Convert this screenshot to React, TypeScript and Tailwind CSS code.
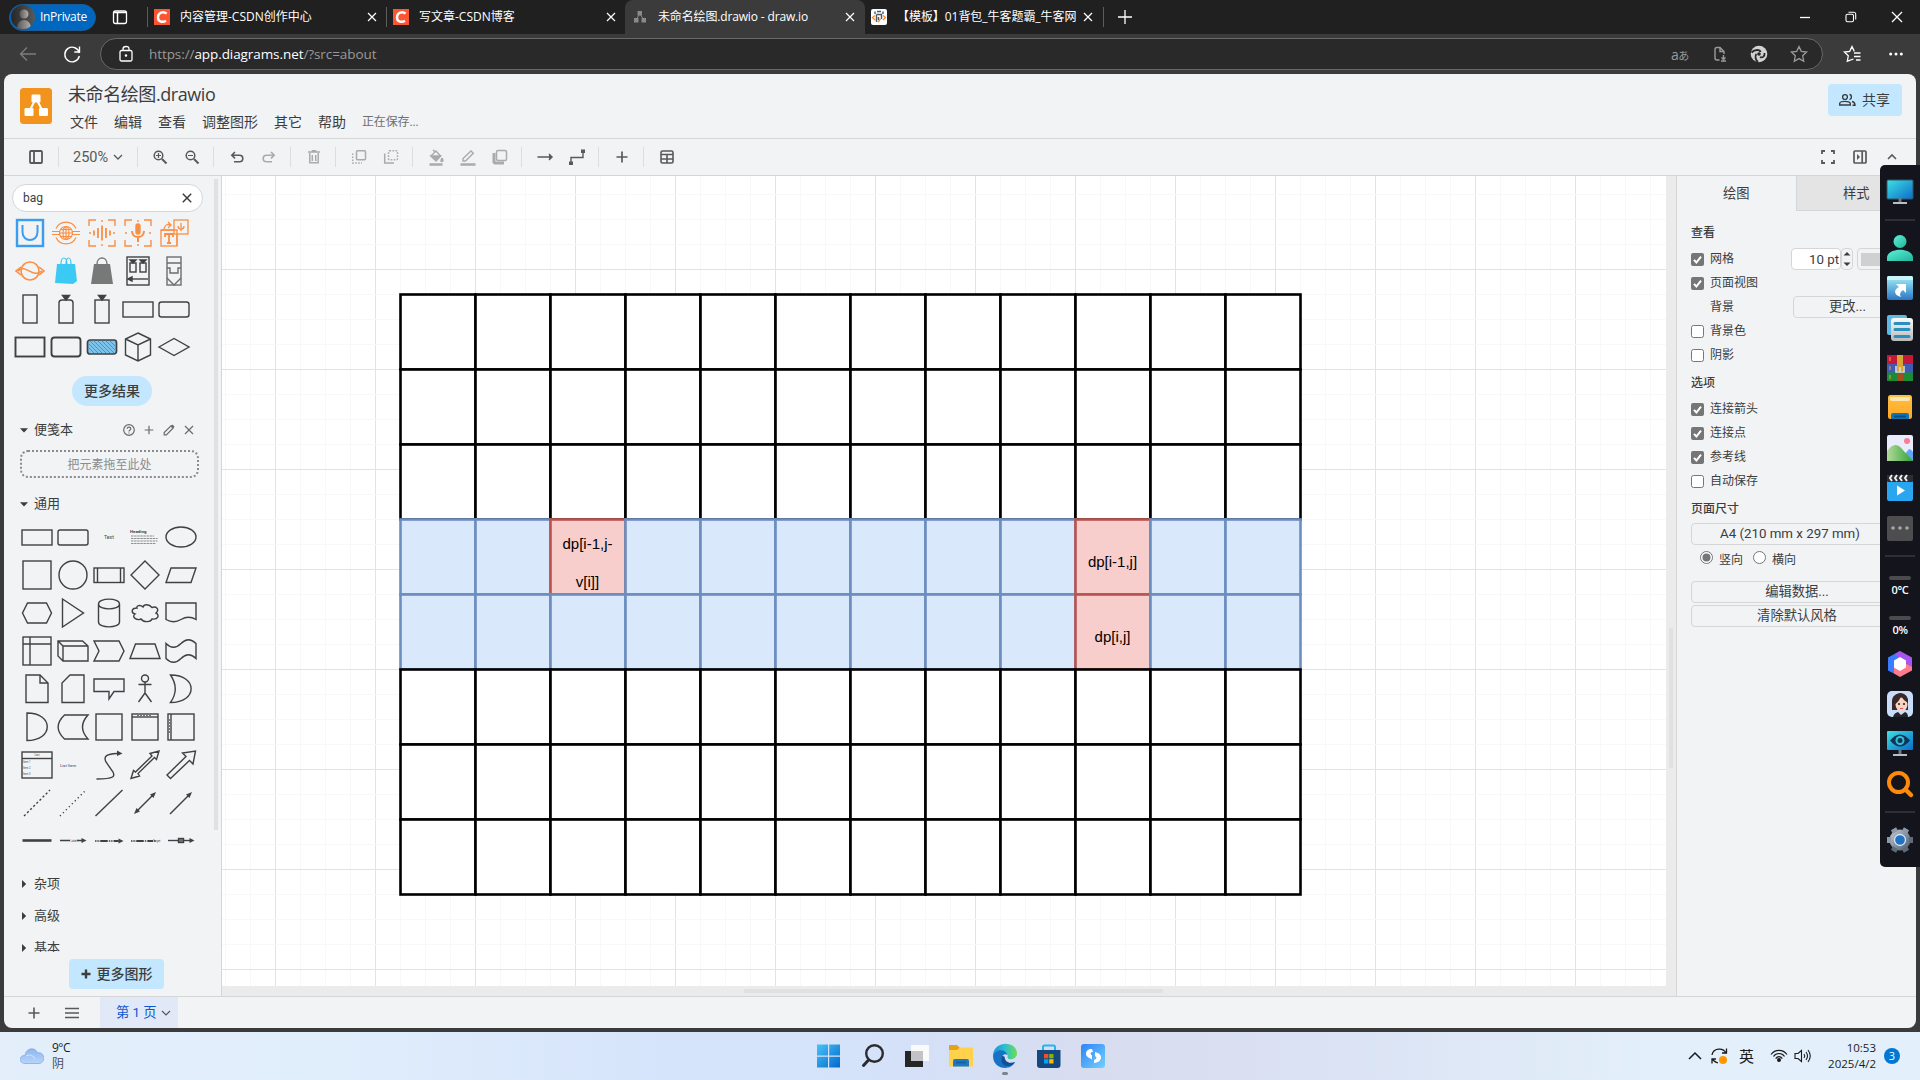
import React from 'react';

type Kids = { children?: React.ReactNode };

const ui = "font-['Roboto','Noto_Sans_CJK_SC',sans-serif]";
const win = "font-['Open_Sans','Noto_Sans_CJK_SC',sans-serif]";

function Ico({ s = 16, c = '', w = 1.3, children }: Kids & { s?: number; c?: string; w?: number }) {
  return (
    <svg width={s} height={s} viewBox={`${-s / 2} ${-s / 2} ${s} ${s}`} className={`shrink-0 overflow-visible ${c}`} fill="none" stroke="currentColor" strokeWidth={w}>
      {children}
    </svg>
  );
}

const Cross = ({ r = 4, w = 1.2 }: { r?: number; w?: number }) => (
  <Ico s={10} w={w}><path d={`M${-r} ${-r}L${r} ${r}M${r} ${-r}L${-r} ${r}`} /></Ico>
);

/* ---------- browser chrome ---------- */

function CsdnIcon() {
  return (
    <div className="flex h-4 w-4 shrink-0 items-center justify-center bg-[#fc5531]">
      <Ico s={16} w={2.4} c="text-white"><path d="M4.6 -3.4C1.5 -6 -4 -4.6 -4 .4C-4 5.2 1 5.6 4 3.8" /></Ico>
    </div>
  );
}

function TabStrip() {
  return (
    <div className={`flex h-[34px] shrink-0 items-center bg-[#202020] text-[12px] text-white ${win}`}>
      <div className="ml-[9px] flex h-[27px] w-[87px] shrink-0 items-center rounded-full border border-[#1b5c97] bg-[#0067c0]">
        <div className="ml-px h-6 w-6 overflow-hidden rounded-full bg-gradient-to-r from-[#262626] to-[#5a5a5a]">
          <svg width="24" height="24">
            <defs><linearGradient id="av"><stop offset="0" stopColor="#555" /><stop offset="1" stopColor="#b5b0aa" /></linearGradient></defs>
            <circle cx="13" cy="9" r="4.5" fill="url(#av)" /><path d="M6 24C6 12 20 12 20 24Z" fill="url(#av)" />
          </svg>
        </div>
        <span className="ml-[5px] whitespace-nowrap text-[12px] tracking-[-0.3px]">InPrivate</span>
      </div>
      <div className="ml-4 flex w-4 justify-center"><Ico><rect x="-6.5" y="-6" width="13" height="12.5" rx="2" /><path d="M-6.5 -4.6H6.5M-2.5 -4V6" strokeWidth="1.5" /></Ico></div>
      <div className="ml-[19px] h-5 w-px bg-[#5c5c5c]" />
      <div className="ml-[6px] flex w-[232px] items-center">
        <CsdnIcon />
        <span className="ml-[10px] w-[182px] whitespace-nowrap">内容管理-CSDN创作中心</span><span className="ml-[5px]"><Cross /></span>
      </div>
      <div className="h-5 w-px bg-[#5c5c5c]" />
      <div className="ml-[6px] flex w-[232px] items-center">
        <CsdnIcon />
        <span className="ml-[10px] w-[182px] whitespace-nowrap">写文章-CSDN博客</span><span className="ml-[5px]"><Cross /></span>
      </div>
      <div className="flex h-full w-[240px] items-center rounded-t-lg bg-[#3b3b3b]">
        <svg width="12" height="12" className="ml-[9px] text-[#8a8a8a]" fill="currentColor" stroke="currentColor"><rect x="3.5" y="0" width="4.5" height="4.5" stroke="none" /><rect x="0" y="7" width="4.5" height="4.5" stroke="none" /><rect x="7.5" y="7" width="4.5" height="4.5" stroke="none" /><path d="M5.7 3L2.5 8M5.7 3L9.5 8" /></svg>
        <span className="ml-[12px] w-[182px] whitespace-nowrap text-[12px] tracking-[-0.15px]">未命名绘图.drawio - draw.io</span><span className="ml-[5px]"><Cross /></span>
      </div>
      <div className="ml-[6px] flex h-4 w-4 items-center justify-center rounded-[2px] bg-white">
        <Ico s={14} w={1.4} c="text-[#4a5a68]"><path d="M-4 -5.5V-3M-2 -5.500H2M4 -5.500V-3M-2.500 -2.500H2.500V2M-2.500 -2.500V5M-.5 0V3" /><path d="M-4 -1.5L-6.5 0.5L-4 3M4 -1.5L6.5 0.5L4 3M-1 5L1.500 2" stroke="#ff8a2a" /></Ico>
      </div>
      <span className="ml-[10px] w-[186px] whitespace-nowrap tracking-[-0.05px]">【模板】01背包_牛客题霸_牛客网</span>
      <span><Cross /></span>
      <div className="ml-[10px] h-5 w-px bg-[#5c5c5c]" />
      <div className="ml-[13px]"><Ico><path d="M-7 0H7M0 -7V7" /></Ico></div>
      <div className="ml-auto flex">
        <div className="flex w-[46px] justify-center"><Ico><path d="M-5 .5H5" /></Ico></div>
        <div className="flex w-[46px] justify-center"><Ico w={1.1}><rect x="-5" y="-2.7" width="7.5" height="7.5" rx="1.5" /><path d="M-2.5 -4.8H3A1.8 1.8 0 0 1 4.7 -3V2.5" /></Ico></div>
        <div className="flex w-[46px] justify-center"><Ico><path d="M-5 -5L5 5M5 -5L-5 5" /></Ico></div>
      </div>
    </div>
  );
}

const star = 'M0 -7.5L2.3 -2.6L7.6 -2L3.7 1.8L4.7 7.2L0 4.6L-4.7 7.2L-3.7 1.8L-7.6 -2L-2.3 -2.6Z';

function AddressBar() {
  return (
    <div className={`flex h-10 shrink-0 items-center bg-[#3b3b3b] ${win}`}>
      <Ico c="ml-5 text-[#7d7d7d]"><path d="M8 0H-7M-1 -6.5L-7.5 0L-1 6.5" /></Ico>
      <Ico c="ml-7 text-white" w={1.4}><path d="M7.3 -1A7.3 7.3 0 1 0 7.3 2M7.5 -7.5V-2H2.3" /></Ico>
      <div className="ml-5 flex h-8 w-[1723px] items-center rounded-full border border-[#686868] bg-[#292929] text-[#9a9a9a]">
        <Ico c="ml-[17px] text-white"><rect x="-6" y="-3.5" width="12" height="10.5" rx="1.5" /><path d="M-3 -3.5V-5Q-3 -7.5 0 -7.5T3 -5V-3.5" /><circle cx="0" cy="1.5" r=".6" fill="currentColor" /></Ico>
        <span className="ml-[15px] whitespace-nowrap text-[13.5px] tracking-[-0.08px]">https://<span className="text-white">app.diagrams.net</span>/?src=about</span>
        <span className="ml-auto w-5 whitespace-nowrap text-[14px] tracking-[-0.5px]">a<span className="text-[11px]">あ</span></span>
        <Ico c="ml-[21px]" w={1.4}><path d="M-.5 6H-3Q-5 6 -5 4V-4.5Q-5 -6.5 -3 -6.5H0L4 -2.5V0M0 -6V-2.5H4M3.5 1V5M1.5 3.5L3.5 5.5L5.5 3.5M1 7H6" /></Ico>
        <svg width="18" height="18" viewBox="-9 -9 18 18" className="ml-[22px]"><circle r="8.3" fill="#d2d2d2" /><path d="M-7.5 -1.5C-4 -5 1 -4.5 1.500 -2M5.500 -1C6 3 3 4 1 3M-1 8C-3.500 6 -4.500 2 -2.500 0" stroke="#292929" strokeWidth="1.8" fill="none" /><circle r="1.800" fill="#292929" /></svg>
        <Ico c="ml-[23px] mr-[15px]"><path d={star} /></Ico>
      </div>
      <Ico c="ml-[21px] text-white"><path d="M1.5 5L-4.7 7.2L-3.7 1.8L-7.6 -2L-2.3 -2.6L0 -7.5L2.3 -2.6M2 -1H8.5M2 2.5H8.5M4 6H8.5" /></Ico>
      <Ico c="ml-[28px] text-white"><g fill="currentColor" stroke="none"><circle cx="-5.3" r="1.5" /><circle r="1.5" /><circle cx="5.3" r="1.5" /></g></Ico>
    </div>
  );
}

/* ---------- application header ---------- */

function Header() {
  return (
    <div className="flex h-[65px] shrink-0 border-b border-[#d5d6d8] text-[#3c3d3f]">
      <svg width="32" height="36" className="ml-4 mt-[14px]">
        <rect width="32" height="36" rx="3.5" fill="#f2931e" />
        <path d="M16 10L9 24M16 10L23 24" stroke="#fff" strokeWidth="2" />
        <g fill="#fff"><rect x="11.5" y="6.5" width="9" height="8" rx="1.3" /><rect x="4.5" y="20" width="9" height="8" rx="1.3" /><rect x="19" y="20" width="9" height="8" rx="1.3" /></g>
      </svg>
      <div className="ml-4 flex flex-col">
        <div className={`mt-[7px] h-[26px] text-[18px] leading-[26px] tracking-[-0.42px] ${win}`}>未命名绘图.drawio</div>
        <div className="ml-[2px] mt-[5px] flex h-[20px] items-center gap-4 whitespace-nowrap text-[14px]">
          <span>文件</span><span>编辑</span><span>查看</span><span>调整图形</span><span>其它</span><span>帮助</span>
          <span className="text-[12px] tracking-[-0.15px] text-[#6f7072]">正在保存...</span>
        </div>
      </div>
      <div className="ml-auto mr-[14px] mt-[10px] flex h-8 w-[74px] items-center rounded bg-[#c2e7ff] text-[14px]">
        <Ico s={18} c="ml-[10px]" w={1.4}><circle cx="-2" cy="-3" r="2.4" /><path d="M-7.3 5V3.5C-7.3 .7 3.3 .7 3.3 3.5V5Z" /><path d="M2.5 -5.500C5 -5.500 5 -.5 2.5 -.5M5 1.500C7.5 2 8 3 8 5.2H5.5" /></Ico>
        <span className="ml-[6px] whitespace-nowrap">共享</span>
      </div>
    </div>
  );
}

const Btn = ({ children, dim }: Kids & { dim?: boolean }) => (
  <div className={`flex h-8 w-8 items-center justify-center ${dim ? 'text-[#a9abad]' : 'text-[#58595b]'}`}>{children}</div>
);
const Sep = () => <div className="ml-[5px] mr-[7px] h-5 w-px bg-[#dcdde0]" />;
const Group = ({ children }: Kids) => <div className="flex items-center">{children}</div>;

function Toolbar() {
  return (
    <div className="flex h-[37px] shrink-0 items-center border-b border-[#d5d6d8]">
      <div className="pl-4"><Btn><Ico w={1.8}><rect x="-6" y="-6" width="12" height="12" rx="1" /><path d="M-2 -6V6" /></Ico></Btn></div>
      <div className="ml-[6px] h-5 w-px bg-[#dcdde0]" />
      <div className="ml-[14px] flex w-[64px] items-center text-[14.5px] text-[#58595b]"><span className="mt-[2px] w-[36px]">250%</span><Ico s={12} c="ml-[3px]"><path d="M-4 -2L0 2L4 -2" /></Ico></div>
      <div className="mr-[6px] h-5 w-px bg-[#dcdde0]" />
      <Group>
        <Btn><Ico w={1.5}><circle cx="-1.5" cy="-1.5" r="4.3" /><path d="M2 2L6.5 6.5" strokeWidth="2" /><path d="M-4 -1.5H1M-1.5 -4V1" strokeWidth="1.2" /></Ico></Btn>
        <Btn><Ico w={1.5}><circle cx="-1.5" cy="-1.5" r="4.3" /><path d="M2 2L6.5 6.5" strokeWidth="2" /><path d="M-4 -1.5H1" strokeWidth="1.2" /></Ico></Btn>
      </Group>
      <Sep />
      <Group>
        <Btn><Ico w={1.6}><path d="M-3 4.8H2.5A3.3 3.3 0 0 0 2.5 -1.8H-5M-2 -5L-5.2 -1.8L-2 1.4" /></Ico></Btn>
        <Btn dim><Ico w={1.6}><path d="M3 4.8H-2.5A3.3 3.3 0 0 1 -2.5 -1.8H5M2 -5L5.2 -1.8L2 1.4" /></Ico></Btn>
      </Group>
      <Sep />
      <Group>
        <Btn dim><Ico w={1.5}><path d="M-4.2 -4V5.8H4.2V-4M-6 -5H6M-2.3 -6.3H2.3M-1.7 -2V4M1.7 -2V4" /></Ico></Btn>
      </Group>
      <Sep />
      <Group>
        <Btn dim><Ico w={1.5}><rect x="-2.5" y="-6.3" width="9" height="9" rx="1" /><path d="M-6.3 -3.5V6H3" strokeDasharray="1.6 1.4" /></Ico></Btn>
        <Btn dim><Ico w={1.5}><rect x="-2.5" y="-6.3" width="9" height="9" rx="1" strokeDasharray="1.6 1.4" /><path d="M-6.3 -3.5V6H3" /></Ico></Btn>
      </Group>
      <Sep />
      <Group>
        <Btn dim><Ico w={1.4}><path d="M-5 -1L0 -6L4.5 -1L0 3.8ZM-1 -5L-3 -7.2" /><path d="M-5 -1H4.5L0 3.8ZM6 1.2Q8 4 6 4.5T6 1.2" fill="currentColor" /><path d="M-6.5 7.5H6.5" strokeWidth="2.6" /></Ico></Btn>
        <Btn dim><Ico w={1.4}><path d="M-5 4V1.5L3 -6L5.3 -3.8L-2.5 4Z" /><path d="M-7.5 7.5H7.5" strokeWidth="2.6" /></Ico></Btn>
        <Btn dim><Ico w={1.5}><rect x="-3.5" y="-6.5" width="10" height="10" rx="1.5" /><path d="M-6 -4V4.5Q-6 6 -4.5 6H4" strokeWidth="3" /></Ico></Btn>
      </Group>
      <Sep />
      <Group>
        <Btn><Ico w={1.4}><path d="M-7.5 0H6M4 -3L7 0L4 3" /><path d="M4 -2.5L7.5 0L4 2.5Z" fill="currentColor" stroke="none" /></Ico></Btn>
        <Btn><Ico w={1.4}><path d="M-6 5V.5H6V-5" /><path d="M-8 4.5H-4V8H-8ZM4 -7.5H8V-4H4Z" fill="currentColor" stroke="none" /></Ico></Btn>
      </Group>
      <Sep />
      <Group>
        <Btn><Ico w={1.7}><path d="M-5.5 0H5.5M0 -5.5V5.5" /></Ico></Btn>
      </Group>
      <Sep />
      <Group>
        <Btn><Ico w={1.6}><rect x="-6" y="-6" width="12" height="12" rx="1.5" /><path d="M-6 -2.5H6M-6 2H6M0 -2.5V6" /></Ico></Btn>
      </Group>
      <div className="ml-auto mr-2 flex">
        <Btn><Ico w={1.8}><path d="M-6 -3V-6H-3M3 -6H6V-3M6 3V6H3M-3 6H-6V3" /></Ico></Btn>
        <Btn><Ico w={1.7}><rect x="-6" y="-6" width="12" height="12" rx="1" /><path d="M2.2 -6V6" /><path d="M-3 -3L0 0L-3 3Z" fill="currentColor" stroke="none" /></Ico></Btn>
        <Btn><Ico w={1.6}><path d="M-4 2L0 -2L4 2" /></Ico></Btn>
      </div>
    </div>
  );
}

/* ---------- left palette ---------- */

const orange = '#fa8f44';
const scanFrame = <path d="M-13 -7V-13H-6M6 -13H13V-7M13 7V13H6M-6 13H-13V7M0 -13V-11M0 13V11M-13 0H-11M13 0H11" />;

const searchShapes: React.ReactNode[] = [
  <g stroke="#3b9df0"><rect x="-13" y="-13" width="26" height="26" strokeWidth="2.4" /><path d="M-7.5 -8V-1C-7.5 9.5 7.5 9.5 7.5 -1V-8" strokeWidth="2" /></g>,
  <g stroke={orange} strokeWidth="1.2"><circle r="6.5" /><ellipse rx="3" ry="6.5" /><path d="M-14 -1.5H-6M14 -1.5H6M-14 1.5H-6M14 1.5H6M-6 0H6M0 -6V6M-5.5 -3.5H5.5M-5.5 3.5H5.5M-10 -4.5C-6 -13 6 -13 10 -4.5M-10 4.5C-6 13 6 13 10 4.5" /></g>,
  <g stroke={orange} strokeWidth="1.4">{scanFrame}<path d="M0 -7.5V7.5M-4 -5V5M4 -5V5M-8 -2.5V2.5M8 -2.5V2.5" strokeWidth="1.8" /></g>,
  <g stroke={orange} strokeWidth="1.4">{scanFrame}<rect x="-2" y="-9" width="4" height="10" rx="2" fill={orange} /><path d="M-6 -2C-6 6 6 6 6 -2M0 5V9" strokeWidth="2" /></g>,
  <g stroke={orange} strokeWidth="1.3"><rect x="-13" y="-3" width="16" height="16" /><rect x="0" y="-13" width="14" height="14" fill="#f1f3f4" /><path d="M-13 -3H3V13" /><path d="M-9 4V1H-1V4M-5 1V10M-7 10H-3" strokeWidth="1.8" /><path d="M-10 -4C-9 -9 -6 -9 -3 -8M-6 -11L-3 -8L-6 -5M7 -10V-5M4 -7C4 -3 10 -3 10 -7M7 -4V-2" /></g>,
  <g stroke={orange} strokeWidth="1.6"><circle r="9" /><path d="M-9 -4L-14 0L-9 4M9 -4L14 0L9 4M-12 0C-4 -8 2 8 12 0" /></g>,
  <g><path d="M-9 -7H9L11 10L7 13L-11 12Z" fill="#3bcaf3" stroke="none" /><path d="M-5 -7C-5 -15 1 -15 1 -7M0 -7C0 -15 5 -15 5 -7" stroke="#3bcaf3" strokeWidth="1.2" /></g>,
  <g><path d="M-8 -7H8L11 13H-11Z" fill="#777978" stroke="none" /><path d="M-5 -7C-5 -15 5 -15 5 -7" stroke="#777978" /></g>,
  <g><rect x="-11" y="-14" width="22" height="28" /><rect x="-8" y="-8" width="6" height="9" /><rect x="2" y="-8" width="6" height="9" /><path d="M-8 -11H-2L-5 -8ZM2 -11H8L5 -8ZM-10 8L-6 6V10Z" fill="currentColor" /><path d="M-9 8H10" /></g>,
  <g stroke="#6b6d6e"><rect x="-7" y="-14" width="14" height="28" /><path d="M-7 -8H7M-7 -3H-4V2H4V-3H7M-7 7L0 14L7 7" /></g>,
  <rect x="-7" y="-14" width="14" height="28" />,
  <g><path d="M-7 14V-6Q-7 -9 -4 -9H4Q7 -9 7 -6V14Z" /><path d="M-3.5 -13.5H3.5L0 -9Z" fill="currentColor" /></g>,
  <g><rect x="-7" y="-9" width="14" height="23" /><path d="M-3.5 -13.5H3.5L0 -9Z" fill="currentColor" /></g>,
  <rect x="-15" y="-7" width="30" height="15" />,
  <rect x="-15" y="-7" width="30" height="15" rx="2.5" />,
  <rect x="-14.5" y="-9.5" width="29" height="19" strokeWidth="1.9" />,
  <rect x="-14.5" y="-9.5" width="29" height="19" rx="3" strokeWidth="1.9" />,
  <g><rect x="-14.5" y="-7" width="29" height="14" rx="2.5" fill="#7cc4ec" strokeWidth="1.7" /><path d="M-12 -6L0 6M-8 -6L4 6M-4 -6L8 6M0 -6L12 6M4 -6L13 3M8 -6L13 -1M-13 -3L-4 6M-13 1L-8 6" stroke="#2a9fd8" strokeWidth="1" /></g>,
  <path d="M0 -14L12.5 -8V8L0 14L-12.5 8V-8ZM-12.5 -8L0 -2L12.5 -8M0 -2V14" />,
  <path d="M-15 0L0 -8.5L15 0L0 8.5Z" />,
];

const tiny = (x: number, y: number, t: string, size = 3, extra: React.SVGProps<SVGTextElement> = {}) => (
  <text x={x} y={y} fontSize={size} fill="#444" stroke="none" {...extra}>{t}</text>
);

const generalShapes: React.ReactNode[] = [
  <rect x="-15" y="-7" width="30" height="15" />,
  <rect x="-15" y="-7" width="30" height="15" rx="2" />,
  tiny(-5, 2, 'Text', 5.2),
  <g>{tiny(-15, -4, 'Heading', 4.4, { fontWeight: 700 })}<path d="M-14 -1H9M-14 1.5H12.5M-14 4H12.5M-14 6.5H11" stroke="#777" strokeWidth=".8" strokeDasharray="2.5 .6" /></g>,
  <ellipse rx="15" ry="10" />,
  <rect x="-14" y="-14" width="28" height="28" />,
  <circle r="14" />,
  <g><rect x="-15" y="-7" width="30" height="14.5" /><path d="M-11.5 -7V7.5M11.5 -7V7.5" /></g>,
  <path d="M0 -14L14 0L0 14L-14 0Z" />,
  <path d="M-10 -7H15L10 7.5H-15Z" />,
  <path d="M-9.5 -10H9.5L14.5 0L9.5 10H-9.5L-14.5 0Z" />,
  <path d="M-10.5 -14L10.5 0L-10.5 14Z" />,
  <path d="M-10.5 -9C-10.5 -15.5 10.5 -15.5 10.5 -9V9C10.5 15.5 -10.5 15.5 -10.5 9ZM-10.5 -9C-10.5 -2.5 10.5 -2.5 10.5 -9" />,
  <path d="M-8 -5C-14 -5 -14 0 -10 1C-14 4 -8 8 -4 6C-1 10 6 9 7 6C13 7 15 2 11 0C15 -4 11 -7 7 -5.5C4 -9 -1 -9 -2 -6C-5 -9 -9 -7 -8 -5Z" />,
  <path d="M-15 -10H15V6.5Q7.5 2 0 6.5T-15 6.5Z" />,
  <g><rect x="-14" y="-14" width="28" height="28" /><path d="M-7 -14V14M-14 -7H14" /></g>,
  <path d="M-15 -10H9.5L15 -5V10H-10L-15 5ZM-15 -10L-10 -5H15M-10 -5V10" />,
  <path d="M-15 -10H10L15 0L10 10H-15L-10 0Z" />,
  <path d="M-9.5 -7H10L15 7.5H-15Z" />,
  <path d="M-15 -7.5Q-7.5 0 0 -7.5T15 -7.5V7.5Q7.5 0 0 7.5T-15 7.5Z" />,
  <g><path d="M-11 -14H3L11 -6V13.5H-11Z" /><path d="M3 -14V-6H11" /></g>,
  <path d="M-3 -14H11V13.5H-11V-6Z" />,
  <path d="M-15 -10H15V2.5H5L0 10V2.5H-15Z" />,
  <g><circle cy="-10.5" r="3.5" /><path d="M0 -7V4M-6.5 -4.5H6.5M0 4L-6.5 13M0 4L6.5 13" /></g>,
  <path d="M-10.5 -14C17 -14 17 13.5 -10.5 13.5Q-1 0 -10.5 -14Z" />,
  <path d="M-10 -14C17 -14 17 13.5 -10 13.5Z" />,
  <path d="M-8.5 -12H15Q4 0 15 12H-8.5C-17 4 -17 -4 -8.5 -12Z" />,
  <rect x="-13" y="-13" width="26" height="26" />,
  <g><rect x="-13" y="-13" width="26" height="26" /><path d="M-13 -10H13" /><path d="M-8 -11.6H7" stroke="#777" strokeDasharray="2 1" /></g>,
  <g><rect x="-13" y="-13" width="26" height="26" /><path d="M-10 -13V13" /><path d="M-11.5 -8V7" stroke="#777" strokeDasharray="2 1" /></g>,
  <g><rect x="-15" y="-13" width="30" height="26" /><path d="M-15 -6.5H15" />{tiny(-2.5, -9, 'List', 3)}{tiny(-14, -2.5, 'Item 1', 2.7)}{tiny(-14, 3.5, 'Item 2', 2.7)}{tiny(-14, 9.5, 'Item 3', 2.7)}</g>,
  tiny(-13, 1.5, 'List Item', 4.2),
  <g><path d="M-12.5 14C6 14 6 11 4 7L-3 -3C-6 -9 -2 -11 8 -11.5" /><path d="M13.5 -11.5L8 -14.5V-9Z" fill="currentColor" stroke="none" /></g>,
  <path d="M14 -14L11.5 -5.5L9.5 -7.5L-7 8.5L-5.5 11L-14 13.5L-11.5 5.5L-9.5 7L7 -9L5 -11.5Z" />,
  <path d="M14.5 -14L12 -1L8.5 -4.5L-10.5 13.5L-14 10L5 -8.5L1.5 -12Z" />,
  <path d="M-13 13L13 -13" strokeDasharray="2.2 2.2" />,
  <path d="M-13 13L13 -13" strokeDasharray="1.2 3" />,
  <path d="M-13.5 13L13.5 -13" />,
  <g><path d="M-8 8L8 -8" /><path d="M-11 11L-8.5 5L-5 8.5ZM11 -11L8.5 -5L5 -8.5Z" fill="currentColor" stroke="none" /></g>,
  <g><path d="M-11 11L8 -8" /><path d="M11 -11L8.5 -5L5 -8.5Z" fill="currentColor" stroke="none" /></g>,
  <path d="M-14.5 -.5H14.5" strokeWidth="2.6" />,
  <g><path d="M-13 -.5H-3M4 -.5H9" />{tiny(-2.5, .8, 'Label', 2.8)}<path d="M13.5 -.5L8.5 -3V2Z" fill="currentColor" stroke="none" /></g>,
  <g><path d="M-8 0H-2M5 0H9" strokeWidth="1.8" /><path d="M-14 0H10" strokeDasharray="1.5 .8" /><path d="M14.5 0L9.5 -2.5V2.5Z" fill="currentColor" stroke="none" /></g>,
  <g><path d="M-8 0H-2M3 0H8" strokeWidth="1.8" /><path d="M-14 0H11" strokeDasharray="1.5 .8" />{tiny(8, 1, 'Target', 2.6)}</g>,
  <g><path d="M-13 -.5H9" /><rect x="-2.5" y="-2.5" width="5" height="4" fill="#777" /><path d="M13.5 -.5L8.5 -3V2Z" fill="currentColor" stroke="none" /></g>,
];

function Palette({ items }: { items: React.ReactNode[] }) {
  return (
    <div className="grid w-[180px] grid-cols-5 auto-rows-[38px] text-[#3f4143]">
      {items.map((n, i) => (
        <div key={i} className="flex items-center justify-center"><Ico s={32} w={1.4}>{n}</Ico></div>
      ))}
    </div>
  );
}

function Section({ label, open, children }: Kids & { label: string; open?: boolean }) {
  return (
    <div className="flex h-8 shrink-0 items-center pl-4 text-[13px]">
      <Ico s={8}><path d={open ? 'M-4 -1.8H4L0 2.4Z' : 'M-2 -4L2.2 0L-2 4Z'} fill="currentColor" stroke="none" /></Ico>
      <span className="ml-[6px] whitespace-nowrap">{label}</span>
      {children}
    </div>
  );
}

function Sidebar() {
  return (
    <div className="flex w-[218px] shrink-0 flex-col border-r border-[#d5d6d8] text-[#3c3d3f]">
      <div className="flex h-[776px] overflow-hidden">
        <div className="flex w-[210px] flex-col">
          <div className="ml-2 mt-2 flex h-7 w-[191px] shrink-0 items-center rounded-full border border-[#d5d6d8] bg-white">
            <span className="ml-[10px] text-[12px]">bag</span>
            <span className="ml-auto mr-[10px]"><Cross r={4.2} w={1.5} /></span>
          </div>
          <div className="ml-[7.5px] mt-[1.5px]"><Palette items={searchShapes} /></div>
          <div className="ml-[68px] mt-[10.5px] flex h-[30px] w-20 shrink-0 items-center justify-center rounded-full bg-[#c2e7ff] pt-px text-[14px] font-medium">更多结果</div>
          <div className="mt-[8px] shrink-0">
            <Section label="便笺本" open>
              <div className="ml-[45px] flex items-center gap-1 text-[#6a6b6d]">
                <span className="ml-[3px]"><Ico w={1.2}><circle r="5.3" /><path d="M-1.8 -1.2C-1.8 -3.6 1.8 -3.4 1.8 -1.2C1.8 .2 0 0 0 1.6M0 2.5V3.5" /></Ico></span>
                <Ico w={1.2}><path d="M-4.3 0H4.3M0 -4.3V4.3" /></Ico>
                <Ico w={1.2}><path d="M-4.8 4.8V2.6L2 -4.2L4.2 -2L-2.6 4.8Z" /><path d="M2.5 -4.7L4.7 -2.5" strokeWidth="2.5" /></Ico>
                <Ico w={1.2}><path d="M-4 -4L4 4M4 -4L-4 4" /></Ico>
              </div>
            </Section>
          </div>
          <div className="ml-4 mt-[4px] flex h-7 w-[179px] shrink-0 items-center justify-center rounded-lg border-2 border-dotted border-[#8a8b8d] pt-px text-[12px] text-[#8a8b8d]">把元素拖至此处</div>
          <div className="mt-[10px] shrink-0"><Section label="通用" open /></div>
          <div className="ml-[15px] mt-[-2.5px]"><Palette items={generalShapes} /></div>
          <div className="mt-[8.5px] shrink-0"><Section label="杂项" /><Section label="高级" /><Section label="基本" /></div>
        </div>
        <div className="mt-[3px] h-[651px] w-1 bg-[#e0e1e3]" />
      </div>
      <div className="ml-[65px] mt-[7px] flex h-[30px] w-[95px] items-center justify-center rounded bg-[#c2e7ff] text-[14px] font-medium">
        <Ico s={10} w={2.4}><path d="M-4.5 0H4.5M0 -4.5V4.5" /></Ico><span className="ml-[6px] mt-px whitespace-nowrap">更多图形</span>
      </div>
    </div>
  );
}

/* ---------- canvas ---------- */

const X0 = 178.5, Y0 = 118.5, S = 75;
const lines = (n: number) => Array.from({ length: n }, (_, i) => i);

function Canvas() {
  const cells: { r: number; c: number; fill: string; stroke: string }[] = [];
  for (let r = 0; r < 8; r++)
    for (let c = 0; c < 12; c++) {
      const red = (r === 3 && (c === 2 || c === 9)) || (r === 4 && c === 9);
      const blue = r === 3 || r === 4;
      cells.push({ r, c, fill: red ? '#f8cecc' : blue ? '#dae8fc' : '#ffffff', stroke: red ? '#b85450' : blue ? '#6c8ebf' : '#000000' });
    }
  return (
    <div className="flex grow flex-col bg-[#ebebeb]">
      <div className="flex h-[810px]">
        <svg width="1444" height="810" className="bg-white" fontFamily="'Liberation Sans', sans-serif" fontSize="15" textAnchor="middle">
          {lines(58).map((i) => <path key={`v${i}`} d={`M${3.5 + 25 * i} 0V810`} stroke={i % 4 === 2 ? '#e3e3e3' : '#f8f8f8'} />)}
          {lines(33).map((i) => <path key={`h${i}`} d={`M0 ${18.5 + 25 * i}H1444`} stroke={i % 4 === 3 ? '#e3e3e3' : '#f8f8f8'} />)}
          {cells.map(({ r, c, fill, stroke }) => <rect key={`${r}-${c}`} x={X0 + c * S} y={Y0 + r * S} width={S} height={S} fill={fill} stroke={stroke} strokeWidth="2.6" />)}
          <text x="365.5" y="373">dp[i-1,j-</text><text x="365.5" y="411">v[i]]</text>
          <text x="890.5" y="391">dp[i-1,j]</text><text x="890.5" y="466">dp[i,j]</text>
        </svg>
        <div className="ml-[3px] mt-[452px] h-[140px] w-1 bg-[#e1e1e1]" />
      </div>
      <div className="ml-[522px] mt-[3px] h-1 w-[419px] bg-[#e1e1e1]" />
    </div>
  );
}

/* ---------- format panel ---------- */

function Check({ label, on, children }: Kids & { label: string; on?: boolean }) {
  return (
    <div className="flex h-6 items-center text-[12px]">
      <svg width="13" height="13" className="shrink-0">
        {on ? <><rect width="13" height="13" rx="2" fill="#767676" /><path d="M3 6.8L5.4 9.5L10 3.6" stroke="#fff" strokeWidth="2" fill="none" /></> : <rect x=".5" y=".5" width="12" height="12" rx="2" fill="#fff" stroke="#767676" />}
      </svg>
      <span className="ml-[6px] whitespace-nowrap">{label}</span>
      {children}
    </div>
  );
}

function Panel() {
  return (
    <div className="w-[240px] shrink-0 overflow-hidden border-l border-[#d5d6d8] text-[#3c3d3f]">
      <div className="flex h-[35px] text-[13.3px]">
        <div className="flex w-[119px] items-center justify-center pt-px">绘图</div>
        <div className="flex w-[121px] items-center justify-center border-b border-l border-[#d5d6d8] bg-[#e4e4e4] pt-px">样式</div>
      </div>
      <div className="ml-[14px] flex w-[212px] flex-col">
        <div className="mt-[10px] h-[24px] text-[12px] font-medium leading-[24px]">查看</div>
        <div className="mt-[2px]"><Check label="网格" on>
          <div className="ml-[57px] flex h-[22px] w-[50px] shrink-0 items-center justify-end rounded border border-[#d5d6d8] bg-white pr-[1px] pt-px text-[13.3px]">10 pt</div>
          <div className="flex h-[22px] w-3 shrink-0 items-center justify-center rounded border border-[#d5d6d8]"><Ico s={10}><path d="M-3.5 -3.5H3.5L0 -7ZM-3.5 3.5H3.5L0 7Z" fill="currentColor" stroke="none" /></Ico></div>
          <div className="ml-1 flex h-[22px] w-[48px] shrink-0 items-center justify-center rounded border border-[#d5d6d8]"><div className="h-[13px] w-10 bg-[#d0d0d0]" /></div>
        </Check></div>
        <Check label="页面视图" on />
        <div className="flex h-6 items-center pl-[19px] text-[12px]">背景<div className="ml-[59px] flex h-[22px] w-[109px] items-center justify-center rounded border border-[#d5d6d8] text-[13.3px]">更改...</div></div>
        <Check label="背景色" /><Check label="阴影" />
        <div className="mt-[4px] h-[25px] text-[12px] font-medium leading-[25px]">选项</div>
        <div className="mt-px"><Check label="连接箭头" on /><Check label="连接点" on /><Check label="参考线" on /><Check label="自动保存" /></div>
        <div className="mt-[4px] h-[25px] text-[12px] font-medium leading-[25px]">页面尺寸</div>
        <div className="mt-[1px] flex h-[22px] items-center rounded border border-[#d5d6d8] pl-[28px] text-[13.3px]">A4 (210 mm x 297 mm)</div>
        <div className="mt-[4px] flex h-[20px] items-center pl-[9px] text-[12px]">
          <svg width="13" height="13" className="mb-1"><circle cx="6.5" cy="6.5" r="6" fill="#fff" stroke="#767676" /><circle cx="6.5" cy="6.5" r="4" fill="#767676" /></svg>
          <span className="ml-[6px] mt-px">竖向</span>
          <svg width="13" height="13" className="mb-1 ml-[10px]"><circle cx="6.5" cy="6.5" r="6" fill="#fff" stroke="#767676" /></svg>
          <span className="ml-[6px] mt-px">横向</span>
        </div>
        <div className="mt-[12px] flex h-[22px] items-center justify-center rounded border border-[#d5d6d8] text-[13.3px]">编辑数据...</div>
        <div className="mt-[2px] flex h-[22px] items-center justify-center rounded border border-[#d5d6d8] text-[13.3px]">清除默认风格</div>
      </div>
    </div>
  );
}

function PageTabs() {
  return (
    <div className="flex h-8 shrink-0 items-center border-t border-[#d5d6d8]">
      <Ico c="ml-[22px] text-[#58595b]" w={1.6}><path d="M-5.5 0H5.5M0 -5.5V5.5" /></Ico>
      <Ico c="ml-[22px] text-[#58595b]" w={1.5}><path d="M-7 -4.5H7M-7 0H7M-7 4.5H7" /></Ico>
      <div className="ml-[20px] flex h-full w-[78px] items-center bg-[#e1e8f7] pl-4 text-[13.3px] text-[#0b57d0]"><span className="w-[42px] whitespace-nowrap">第 1 页</span><Ico s={12} c="ml-[2px] text-[#58595b]" w={1.2}><path d="M-4 -2L0 2L4 -2" /></Ico></div>
    </div>
  );
}

/* ---------- floating dock ---------- */

const Slot = ({ children }: Kids) => (
  <div className="flex h-10 w-10 shrink-0 items-center justify-center"><svg width="26" height="26" viewBox="0 0 26 26" className="overflow-visible" fill="none">{children}</svg></div>
);
const Rule = () => <div className="flex h-4 shrink-0 items-center justify-center"><div className="h-[2px] w-[30px] bg-[#2f3037]" /></div>;
const Meter = ({ v }: { v: string }) => (
  <div className="flex h-10 shrink-0 flex-col items-center pt-3"><div className="h-1 w-[22px] rounded-full bg-[#4b4b4d]" /><div className={`mt-[3px] text-[11px] font-semibold leading-[13px] tracking-[-0.3px] text-white ${win}`}>{v}</div></div>
);
const Stand = () => <><path d="M13 19V23" stroke="#6c7780" strokeWidth="3" /><path d="M6 24H20" stroke="#b7bec6" strokeWidth="2" /></>;

function Dock() {
  return (
    <div className="absolute left-[1880px] top-[165px] flex h-[702px] w-10 flex-col rounded-l-[5px] bg-[#14151c] pt-[7px]">
      <svg width="0" height="0" className="absolute">
        <defs>
          <linearGradient id="mon" x2="1" y2="1"><stop stopColor="#3ee0e2" /><stop offset="1" stopColor="#0b6ccb" /></linearGradient>
          <linearGradient id="teal" x2="1" y2="1"><stop stopColor="#5ff0d9" /><stop offset="1" stopColor="#1fb59a" /></linearGradient>
          <linearGradient id="sky" x2="0" y2="1"><stop stopColor="#a5f1fa" /><stop offset="1" stopColor="#2a77c4" /></linearGradient>
          <linearGradient id="fold" x2="0" y2="1"><stop stopColor="#ffbf3f" /><stop offset="1" stopColor="#ffa726" /></linearGradient>
          <linearGradient id="grn"><stop stopColor="#b4d99a" /><stop offset="1" stopColor="#2fa336" /></linearGradient>
          <linearGradient id="paper" x2="0" y2="1"><stop stopColor="#fafafa" /><stop offset="1" stopColor="#b9b9b9" /></linearGradient>
          <linearGradient id="gear" x2="1" y2="1"><stop stopColor="#c3ced8" /><stop offset="1" stopColor="#4a5766" /></linearGradient>
        </defs>
      </svg>
      <Slot><rect y="1" width="26" height="19" rx="1" fill="url(#mon)" stroke="#33546a" /><Stand /></Slot>
      <Rule />
      <Slot><circle cx="13" cy="6.5" r="6.5" fill="url(#teal)" /><path d="M0 26V23C0 12 26 12 26 23V26Z" fill="url(#teal)" /></Slot>
      <Slot><rect y="1" width="26" height="24" rx="2" fill="url(#sky)" /><path d="M0 5V3Q0 1 2 1H24Q26 1 26 3V5Z" fill="#c7f7fb" /><path d="M9 9H19V18L16 15C12 18 13 20 14 22C6 20 7 14 12 12Z" fill="#fff" /></Slot>
      <Slot><rect width="20" height="20" rx="2" fill="#5fb9e6" /><rect x="4" y="3" width="22" height="23" rx="3" fill="url(#paper)" /><path d="M8 8.5H22M8 14.5H22M8 21.5H22" stroke="#2a8fc0" strokeWidth="3" strokeLinecap="round" /></Slot>
      <Slot><rect width="26" height="9" fill="#c3183a" /><rect y="9" width="26" height="9" fill="#3f5bb5" /><rect y="17.5" width="26" height="8.5" fill="#1c8b35" /><rect x="10" width="6" height="16" fill="#d8a632" /><rect x="10" y="18" width="6" height="8" fill="#a3501c" /><path d="M9 11V17H17V11M13 12V17" stroke="#ddd" strokeWidth="1.6" /><path d="M3 2V6M3 11V15M3 20V24" stroke="#e3a43a" /></Slot>
      <Slot><rect x="1" y="0" width="24" height="24" rx="2.5" fill="url(#fold)" /><path d="M3 2H23V4Q23 6 21 6H5Q3 6 3 4Z" fill="#ffe6b5" /><path d="M4 24V20Q4 18 6 18H20Q22 18 22 20V24Z" fill="#1272b4" /><path d="M7 21.5H19" stroke="#0b4c82" strokeWidth="2" /></Slot>
      <Slot><rect width="26" height="26" rx="2" fill="#e9ecfa" /><path d="M14 24L22 14Q24 14 26 17V26H14Z" fill="#62a3f3" /><path d="M0 16Q8 5 15 14L26 26H0Z" fill="url(#grn)" /><circle cx="20" cy="6" r="3" fill="#f77f98" /></Slot>
      <Slot><rect width="26" height="26" rx="2" fill="#2aa5f0" /><rect width="26" height="7" rx="1" fill="#2c2e33" /><path d="M5 0L3 3L5 6M10 0L8 3L10 6M15 0L13 3L15 6M20 0L18 3L20 6" stroke="#eee" strokeWidth="2" /><path d="M10 10.5L18 15.5L10 20.5Z" fill="#fff" /></Slot>
      <Slot><rect y="1" width="26" height="25" rx="2" fill="#4d4d4f" /><g fill="#a8a8a8"><circle cx="6" cy="13" r="1.8" /><circle cx="13" cy="13" r="1.8" /><circle cx="20" cy="13" r="1.8" /></g></Slot>
      <Rule />
      <Meter v="0°C" /><Meter v="0%" />
      <Slot><path d="M13 0L1 6.500V19.500L8 23L13 12Z" fill="#3b7cff" /><path d="M25 13V19.5L13 26L7 22.5V13Z" fill="#ff7b8c" /><path d="M13 0L8 3L14 10L25 16V6.5Z" fill="#a855f0" /><path d="M13 6L19 9.5V16.5L13 20L7 16.5V9.5Z" fill="#fff" /></Slot>
      <Slot><rect width="26" height="26" rx="5" fill="#c9dcf9" /><path d="M5 19V10C5 0 21 0 21 10V19Z" fill="#3a2826" /><ellipse cx="14.5" cy="13.5" rx="6" ry="7" fill="#f6d3c3" /><path d="M7 14Q12 11 14 5Q16 9 21 12Q21 2 13 2Q5 3 7 14Z" fill="#3a2826" /><circle cx="12" cy="13" r="1.1" fill="#3a2020" /><circle cx="17" cy="13" r="1.1" fill="#3a2020" /><path d="M13 17.5H16" stroke="#c55" /><path d="M6 26Q7 22 11 21L14 24L18 21Q21 22 21 26Z" fill="#23232a" /></Slot>
      <Slot><rect y="0" width="26" height="19" rx="1" fill="url(#mon)" /><path d="M3 9.5Q13 -2.5 23 9.5Q13 21.5 3 9.5Z" fill="#0f3554" /><circle cx="13" cy="9.5" r="4.5" fill="#2ec0de" /><circle cx="13" cy="9.5" r="2.5" fill="#0f3554" /><Stand /></Slot>
      <Slot><circle cx="11.5" cy="11.5" r="9.5" stroke="#ff8a0a" strokeWidth="4" /><path d="M18.5 18.5L24 24" stroke="#ff8a0a" strokeWidth="4.5" strokeLinecap="round" /></Slot>
      <Rule />
      <Slot><circle cx="13" cy="13" r="10.5" fill="url(#gear)" /><g stroke="#8c99a6" strokeWidth="6"><path d="M0 13H4M6.500 1.800L8.500 5.200M19.500 1.800L17.500 5.200" /></g><g stroke="#5d6a78" strokeWidth="6"><path d="M26 13H22M6.500 24.200L8.500 20.800M19.500 24.200L17.500 20.800" /></g><circle cx="13" cy="13" r="5.5" fill="#2272c3" stroke="#d7e6f5" strokeWidth="1.3" /></Slot>
    </div>
  );
}

/* ---------- taskbar ---------- */

const App24 = ({ children }: Kids) => <svg width="24" height="24" viewBox="0 0 24 24" fill="none" className="overflow-visible">{children}</svg>;

function Taskbar() {
  return (
    <div className={`relative flex h-12 shrink-0 items-center bg-[linear-gradient(90deg,#e3eefa_0%,#e0edfb_18%,#d6e4fb_35%,#d4e2fa_45%,#d8dcef_57%,#dbe3f4_70%,#e3effa_86%,#e3effa_100%)] text-[12px] text-[#1b1b1b] ${win}`}>
      <svg width="24" height="16" className="ml-5">
        <defs><linearGradient id="cl" x2="0" y2="1"><stop stopColor="#8fb6ef" /><stop offset="1" stopColor="#b6d5fb" /></linearGradient></defs>
        <path d="M5 15.5C-2 15 -1 7 5 7.5C6 -1 16 -1 17.5 5C25 3 26 15 19 15.5Z" fill="url(#cl)" stroke="#87a9e8" strokeWidth=".8" /><path d="M6 8Q12 5 15 11" stroke="#d3e5fd" fill="none" />
      </svg>
      <div className="ml-2 flex flex-col whitespace-nowrap"><span className="h-4 leading-4 tracking-[-0.5px]">9°C</span><span className="h-4 leading-4 text-[#4a4f57]">阴</span></div>
      <div className="absolute left-[817px] top-3 flex gap-5">
        <App24><defs><linearGradient id="wn" x2="1" y2="1"><stop stopColor="#45c4f7" /><stop offset="1" stopColor="#0467cb" /></linearGradient></defs><path d="M0 .5H11V11.5H0ZM12.2 .5H23V11.5H12.2ZM0 12.7H11V23.5H0ZM12.2 12.7H23V23.5H12.2Z" fill="url(#wn)" /></App24>
        <App24><circle cx="13.5" cy="9.5" r="8.3" stroke="#2b2b2e" strokeWidth="2.4" /><path d="M7.5 16L2.5 21.5" stroke="#2b2b2e" strokeWidth="3" strokeLinecap="round" /></App24>
        <App24><rect x="0" y="7" width="18" height="16" fill="#262626" /><rect x="6" y="1" width="18" height="16" fill="#fafafa" /><rect x="6" y="7" width="12" height="10" fill="#c2c3c6" /></App24>
        <App24><path d="M0 2Q0 1 1 1H8L11 4H23Q24 4 24 5V12H0Z" fill="#e6a11b" /><path d="M0 6H8L11 3.5H24V22.5H0Z" fill="#ffd14d" /><path d="M4 22.5V17Q4 15 6 15H18Q20 15 20 17V22.5Z" fill="#1a78c4" /><path d="M7 18.5H17" stroke="#0e5ea3" strokeWidth="1.5" /></App24>
        <App24>
          <defs><linearGradient id="eg1" x1="0" x2="1"><stop stopColor="#1a8fdc" /><stop offset=".5" stopColor="#2cc0cf" /><stop offset="1" stopColor="#6fdc52" /></linearGradient></defs>
          <path d="M0 12C0 -4 24 -4 24 9.5C24 16 14 17 14.5 13C16 8 8 5 0 12Z" fill="url(#eg1)" />
          <path d="M0 12C3 4 13 5 14.5 11C10 8 6 15 11 20C15 23 20 20 22 18C17 28 0 25 0 12Z" fill="#1672c4" /><path d="M9 12C7 16 9 22 15 22C19 21.5 21 19.5 22 18C16 20 12 18 11.5 12.5Z" fill="#124e96" />
          <rect x="9" y="28" width="6" height="3" rx="1.5" fill="#7c828e" />
        </App24>
        <App24><path d="M6 7V3Q6 1.5 7.5 1.5H16.5Q18 1.5 18 3V7" stroke="#25b5ee" strokeWidth="2" /><path d="M0 6H23.5V21Q23.5 24 20.5 24H3Q0 24 0 21Z" fill="#15487e" /><rect x="7" y="10" width="4.3" height="4.3" fill="#f25022" /><rect x="12.2" y="10" width="4.3" height="4.3" fill="#7fba00" /><rect x="7" y="15.2" width="4.3" height="4.3" fill="#00a4ef" /><rect x="12.2" y="15.2" width="4.3" height="4.3" fill="#ffb900" /></App24>
        <App24><defs><linearGradient id="sw" x2="1" y2="1"><stop stopColor="#2c84f7" /><stop offset="1" stopColor="#74d0fc" /></linearGradient></defs><rect width="24" height="24" rx="3" fill="url(#sw)" /><path d="M11 5C7 5 5 7 5 9.5C5 13 8 13.5 11 15.5V11.5C9 10 9 8 12 8ZM13 19C18 18.5 20 16 20 13.5C20 10 17 9 14 8V12C16 13.5 16 15 13 16Z" fill="#fff" /></App24>
      </div>
      <div className="ml-auto mr-5 flex items-center">
        <Ico w={1.5}><path d="M-6 3L0 -3L6 3" /></Ico>
        <Ico c="ml-2" w={1.3}><path d="M-7 -1C-6 -8 4 -9 7 -3M7.5 -7.5V-3H3M-1 7C-4 6 -6 5 -6.5 2.5M-7 7.5V3H-3" /><circle cx="4" cy="4" r="4" fill="#ff9800" stroke="none" /></Ico>
        <span className="ml-3 w-4 text-[15px]">英</span>
        <Ico c="ml-4" w={1.2}><path d="M-8 -1.5C-4 -7 4 -7 8 -1.5M-5.5 .5C-3 -3.5 3 -3.5 5.5 .5M-3.3 2.7C-1.5 0 1.5 0 3.3 2.7" /><circle cy="4" r="1.4" fill="currentColor" /></Ico>
        <Ico c="ml-2" w={1.1}><path d="M-8 -2.5H-5L-1.5 -5.5V5.5L-5 2.5H-8ZM1 -2Q2.5 0 1 2M3 -4Q6 0 3 4M5 -6Q9.5 0 5 6" /></Ico>
        <div className="ml-[13px] flex w-[52px] flex-col items-end whitespace-nowrap text-[11.5px]"><span className="h-4 leading-4">10:53</span><span className="h-4 leading-4">2025/4/2</span></div>
        <div className="ml-2 flex h-4 w-4 items-center justify-center rounded-full bg-[#0078d4] text-[11px] text-white">3</div>
      </div>
    </div>
  );
}

export default function App() {
  return (
    <div className="relative flex h-[1080px] w-[1920px] flex-col overflow-hidden bg-[#3b3b3b]">
      <TabStrip />
      <AddressBar />
      <div className={`mx-1 mb-1 flex h-[954px] shrink-0 flex-col overflow-hidden rounded-lg bg-[#f1f3f4] ${ui}`}>
        <Header />
        <Toolbar />
        <div className="flex h-[820px] shrink-0">
          <Sidebar />
          <Canvas />
          <Panel />
        </div>
        <PageTabs />
      </div>
      <Taskbar />
      <Dock />
    </div>
  );
}
